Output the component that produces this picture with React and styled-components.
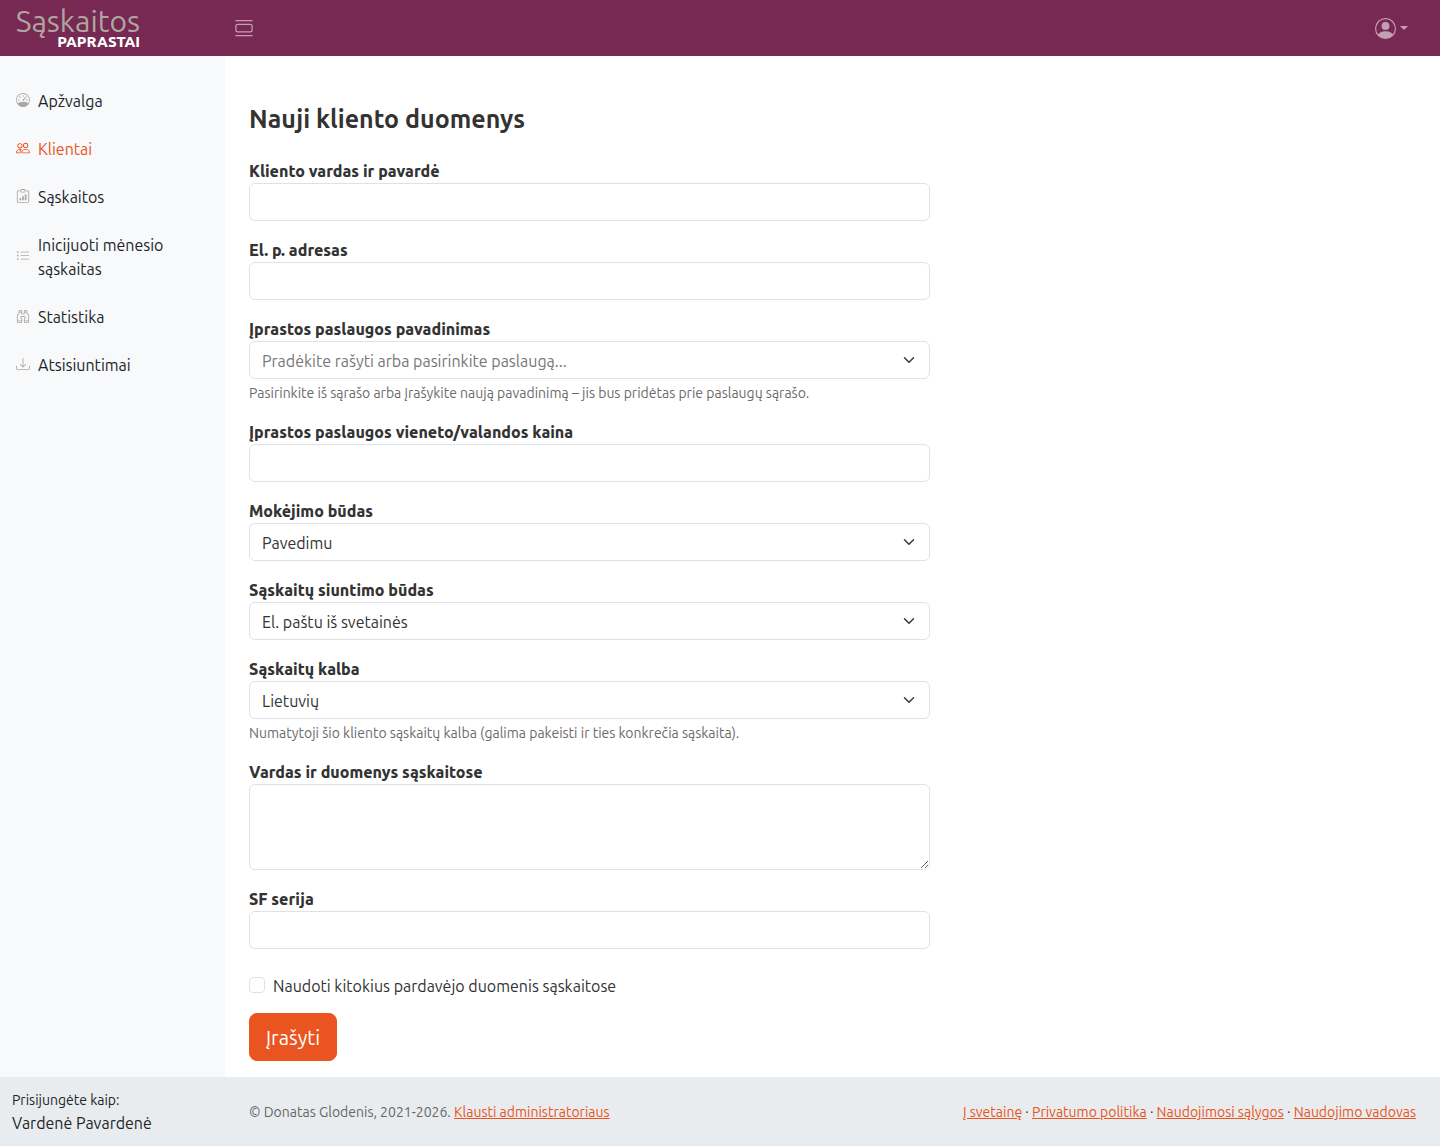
import React, { useState } from 'react';
import styled, { createGlobalStyle } from 'styled-components';
import {
    BsBinoculars,
    BsClipboardData,
    BsDownload,
    BsListUl,
    BsPeople,
    BsPersonCircle,
    BsSpeedometer,
    BsViewList,
} from 'react-icons/bs';

const menu = [
    { title: 'Apžvalga', icon: BsSpeedometer },
    { title: 'Klientai', icon: BsPeople, active: true },
    { title: 'Sąskaitos', icon: BsClipboardData },
    { title: 'Inicijuoti mėnesio sąskaitas', icon: BsListUl },
    { title: 'Statistika', icon: BsBinoculars },
    { title: 'Atsisiuntimai', icon: BsDownload },
];

const links = ['Į svetainę', 'Privatumo politika', 'Naudojimosi sąlygos', 'Naudojimo vadovas'];

const Chevron = () => (
    <ChevronIcon viewBox="0 0 16 16" aria-hidden="true">
        <path d="m2 5 6 6 6-6" />
    </ChevronIcon>
);

const Field = ({ id, label, hint, children }) => (
    <FieldBox>
        <Label htmlFor={id}>{label}</Label>
        {children}
        {hint && <Hint>{hint}</Hint>}
    </FieldBox>
);

const SelectField = ({ id, label, hint, options }) => (
    <Field id={id} label={label} hint={hint}>
        <ControlWrap>
            <Select id={id}>
                {options.map((option) => <option key={option}>{option}</option>)}
            </Select>
            <Chevron />
        </ControlWrap>
    </Field>
);

const ClientForm = () => {
    const [otherSeller, setOtherSeller] = useState(false);

    return (
        <Form onSubmit={(e) => e.preventDefault()}>
            <Field id="name" label="Kliento vardas ir pavardė">
                <Input id="name" type="text" />
            </Field>
            <Field id="email" label="El. p. adresas">
                <Input id="email" type="email" />
            </Field>
            <Field
                id="service"
                label="Įprastos paslaugos pavadinimas"
                hint="Pasirinkite iš sąrašo arba įrašykite naują pavadinimą – jis bus pridėtas prie paslaugų sąrašo."
            >
                <ControlWrap>
                    <Input id="service" type="text" placeholder="Pradėkite rašyti arba pasirinkite paslaugą..." />
                    <Chevron />
                </ControlWrap>
            </Field>
            <Field id="price" label="Įprastos paslaugos vieneto/valandos kaina">
                <Input id="price" type="text" />
            </Field>
            <SelectField id="payment" label="Mokėjimo būdas" options={['Pavedimu', 'Grynaisiais']} />
            <SelectField id="sending" label="Sąskaitų siuntimo būdas" options={['El. paštu iš svetainės']} />
            <SelectField
                id="language"
                label="Sąskaitų kalba"
                options={['Lietuvių', 'Anglų']}
                hint="Numatytoji šio kliento sąskaitų kalba (galima pakeisti ir ties konkrečia sąskaita)."
            />
            <Field id="details" label="Vardas ir duomenys sąskaitose">
                <Textarea id="details" />
            </Field>
            <Field id="series" label="SF serija">
                <Input id="series" type="text" />
            </Field>
            <Actions>
                <CheckRow>
                    <Checkbox
                        id="seller"
                        type="checkbox"
                        checked={otherSeller}
                        onChange={(e) => setOtherSeller(e.target.checked)}
                    />
                    <label htmlFor="seller">Naudoti kitokius pardavėjo duomenis sąskaitose</label>
                </CheckRow>
                <Submit type="submit">Įrašyti</Submit>
            </Actions>
        </Form>
    );
};

const App = () => (
    <Page>
        <GlobalStyle />
        <Header>
            <Logo href="#">
                <LogoTop>Sąskaitos</LogoTop>
                <LogoBottom>PAPRASTAI</LogoBottom>
            </Logo>
            <IconButton type="button" aria-label="Meniu"><BsViewList size={20} /></IconButton>
            <UserButton type="button" aria-label="Paskyra">
                <BsPersonCircle size={21} />
                <Caret />
            </UserButton>
        </Header>
        <Body>
            <Sidebar>
                {menu.map(({ title, icon: Icon, active }) => (
                    <NavLink key={title} href="#" $active={active}>
                        <Icon size={14} />
                        <span>{title}</span>
                    </NavLink>
                ))}
            </Sidebar>
            <Main>
                <Title>Nauji kliento duomenys</Title>
                <ClientForm />
            </Main>
        </Body>
        <Footer>
            <SignedIn>
                <small>Prisijungėte kaip:</small>
                <div>Vardenė Pavardenė</div>
            </SignedIn>
            <FooterText>
                <Copyright>© Donatas Glodenis, 2021-2026. <Link href="#">Klausti administratoriaus</Link></Copyright>
                <div>
                    {links.map((link, i) => (
                        <React.Fragment key={link}>
                            {i > 0 && ' · '}
                            <Link href="#">{link}</Link>
                        </React.Fragment>
                    ))}
                </div>
            </FooterText>
        </Footer>
    </Page>
);

export default App;

const GlobalStyle = createGlobalStyle`
    *, *::before, *::after {
        box-sizing: border-box;
    }
    body {
        margin: 0;
        background: #fff;
        color: #333;
        font-family: Ubuntu, 'Open Sans', sans-serif;
        font-size: 16px;
        line-height: 24px;
    }
    button, input, select, textarea {
        font: inherit;
        color: inherit;
    }
`;

const Page = styled.div`
    display: flex;
    flex-direction: column;
    min-height: 100vh;
`;

const Header = styled.header`
    display: flex;
    align-items: center;
    height: 56px;
    padding-right: 32px;
    background: #772953;
`;

const Logo = styled.a`
    display: flex;
    flex-direction: column;
    align-items: flex-end;
    width: 140px;
    margin-right: 94px;
    text-decoration: none;
`;

const LogoTop = styled.span`
    color: #aea79f;
    font-size: 30px;
    line-height: 28px;
`;

const LogoBottom = styled.span`
    color: #fff;
    font-size: 15px;
    font-weight: 800;
    line-height: 14px;
`;

const IconButton = styled.button`
    display: flex;
    align-items: center;
    padding: 0;
    border: 0;
    background: none;
    color: #c39fb4;
    cursor: pointer;
`;

const UserButton = styled(IconButton)`
    gap: 4px;
    margin-left: auto;
`;

const Caret = styled.span`
    border: 4px solid transparent;
    border-top-color: currentColor;
    border-bottom: 0;
`;

const Body = styled.div`
    display: flex;
    flex: 1;
`;

const Sidebar = styled.nav`
    flex: none;
    width: 225px;
    padding-top: 21px;
    background: #f8f9fa;
`;

const NavLink = styled.a`
    display: flex;
    align-items: center;
    gap: 8px;
    padding: 12px 16px;
    color: ${(props) => (props.$active ? '#e95420' : '#212529')};
    text-decoration: none;

    svg {
        flex: none;
        margin-bottom: 2px;
        color: ${(props) => (props.$active ? '#e95420' : '#aea79f')};
    }
`;

const Main = styled.main`
    flex: 1;
    min-width: 0;
    padding: 48px 24px 16px;
`;

const Title = styled.h1`
    margin: 0 0 24px;
    font-size: 25px;
    font-weight: 600;
    line-height: 31px;
`;

const Form = styled.form`
    display: flex;
    flex-direction: column;
    gap: 17px;
    width: 58.3333%;
`;

const FieldBox = styled.div`
    display: flex;
    flex-direction: column;
`;

const Label = styled.label`
    font-weight: 800;
`;

const Hint = styled.small`
    margin-top: 4px;
    margin-bottom: -1px;
    color: #6b6b6b;
    font-size: 14px;
    line-height: 21px;
`;

const ControlWrap = styled.div`
    position: relative;
    display: flex;
`;

const Input = styled.input`
    width: 100%;
    height: 38px;
    padding: 7px 12px 5px;
    border: 1px solid #dee2e6;
    border-radius: 6px;
    background: #fff;

    &::placeholder {
        color: #777;
        opacity: 1;
    }
`;

const Select = styled(Input).attrs({ as: 'select' })`
    appearance: none;
`;

const Textarea = styled(Input).attrs({ as: 'textarea' })`
    display: block;
    height: 86px;
    resize: vertical;
`;

const ChevronIcon = styled.svg`
    position: absolute;
    top: 13px;
    right: 13px;
    width: 16px;
    height: 12px;
    fill: none;
    stroke: #343a40;
    stroke-width: 2;
    stroke-linecap: round;
    stroke-linejoin: round;
    pointer-events: none;
`;

const Actions = styled.div`
    display: flex;
    flex-direction: column;
    align-items: flex-start;
    gap: 15px;
    padding-top: 8px;
`;

const CheckRow = styled.div`
    display: flex;
    align-items: flex-start;
    gap: 8px;
`;

const Checkbox = styled.input`
    flex: none;
    width: 16px;
    height: 16px;
    margin: 3px 0 0;
    border: 1px solid #dee2e6;
    border-radius: 4px;
    background: #fff;
    appearance: none;

    &:checked {
        background: #e95420;
        border-color: #e95420;
    }
`;

const Submit = styled.button`
    padding: 9px 16px 7px;
    border: 1px solid #e95420;
    border-radius: 8px;
    background: #e95420;
    color: #fff;
    font-size: 20px;
    line-height: 30px;
    cursor: pointer;
`;

const Footer = styled.footer`
    display: flex;
    align-items: center;
    background: #e9ecef;
`;

const SignedIn = styled.div`
    flex: none;
    width: 225px;
    padding: 13px 12px 11px;
    color: #212529;

    small {
        display: block;
        font-size: 14px;
        line-height: 21px;
    }
`;

const FooterText = styled.div`
    display: flex;
    flex: 1;
    justify-content: space-between;
    padding: 2px 24px 0;
    font-size: 14px;
    line-height: 21px;
`;

const Copyright = styled.div`
    color: #666;
`;

const Link = styled.a`
    color: #e95420;
`;
